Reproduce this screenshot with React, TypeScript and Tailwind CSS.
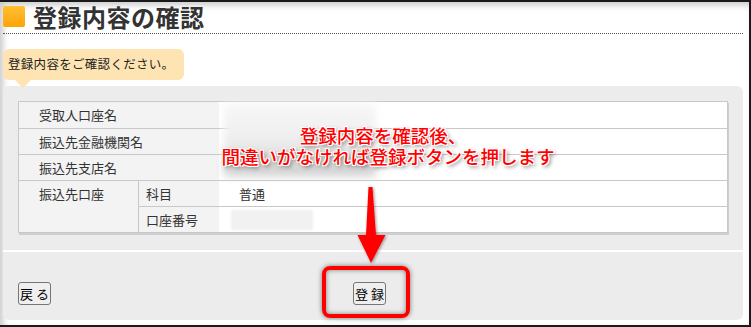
const labelCell = "flex items-center bg-[#f3f3f3] pl-[20px]";

const rows = ["受取人口座名", "振込先金融機関名", "振込先支店名"];

function Btn({ children, className = "" }: { children: React.ReactNode; className?: string }) {
  return (
    <button
      className={`flex h-[23px] w-[33px] items-center justify-center rounded-[3px] border border-[#767676] bg-[#efefef] text-[13px] leading-none text-black ${className}`}
    >
      {children}
    </button>
  );
}

export default function App() {
  return (
    <div className="relative h-[327px] w-[751px] overflow-hidden border-y-2 border-r-2 border-[#1a1a1a] bg-white font-['Noto_Sans_CJK_JP',sans-serif] text-[#333] shadow-[inset_3px_3px_6px_rgba(0,0,0,0.22)]">
      {/* title */}
      <div className="ml-[3px] mr-[6px] flex h-[32px] items-start gap-[8px] border-b border-dotted border-[#555] pt-[4px]">
        <span className="h-[21px] w-[22px] rounded-[2px] bg-gradient-to-b from-[#ffbf2e] to-[#ffa400]" />
        <h1 className="text-[24px] font-bold leading-[22px] tracking-[0.5px] text-[#333]">登録内容の確認</h1>
      </div>

      {/* bubble */}
      <div className="relative ml-[3px] mt-[15px] flex h-[31px] w-[181px] items-center rounded-[6px] bg-[#ffe4b3] pl-[5px] text-[12.5px] tracking-[0.3px] text-[#222]">
        登録内容をご確認ください。
        <span className="absolute left-[12px] top-[31px] z-10 h-0 w-0 border-x-[8px] border-t-[8px] border-x-transparent border-t-[#ffe4b3]" />
      </div>

      {/* panel */}
      <div className="ml-[3px] mr-[6px] mt-[6px] h-[234px] rounded-[6px] bg-[#ececec] px-[15px] pt-[15px]">
        <div className="border border-[#c8c8c8] bg-white text-[13px] text-[#333] shadow-[1px_2px_0_#cfcfcf]">
          {rows.map((r, i) => (
            <div key={r} className={`grid h-[26px] grid-cols-[200px_1fr] ${i === 0 ? "h-[25px]" : "border-t border-[#c8c8c8]"}`}>
              <div className={labelCell}>{r}</div>
              <div />
            </div>
          ))}
          <div className="flex border-t border-[#c8c8c8]">
            <div className="w-[120px] border-r border-[#c8c8c8] bg-[#f3f3f3]">
              <div className="flex h-[25px] items-center pl-[20px]">振込先口座</div>
            </div>
            <div className="flex-1">
              <div className="grid h-[25px] grid-cols-[80px_1fr]">
                <div className="flex items-center bg-[#f3f3f3] pl-[7px]">科目</div>
                <div className="flex items-center pl-[20px]">普通</div>
              </div>
              <div className="grid h-[26px] grid-cols-[80px_1fr] border-t border-[#c8c8c8]">
                <div className="flex items-center bg-[#f3f3f3] pl-[7px]">口座番号</div>
                <div className="flex items-center pl-[12px]">
                  <span className="h-[20px] w-[82px] bg-[#f1f1f1] blur-[1px]" />
                </div>
              </div>
            </div>
          </div>
        </div>

        <div className="-mx-[15px] mt-[17px] h-[2px] bg-white" />

        <div className="mt-[30px] flex">
          <Btn>戻 る</Btn>
          <Btn className="ml-[302px]">登 録</Btn>
        </div>
      </div>

      {/* redacted values */}
      <div className="absolute left-[224px] top-[102px] h-[72px] w-[152px] bg-gradient-to-b from-[#f7f7f7] via-[#eeeeee] to-[#cdcdcd] blur-[4px]" />

      {/* annotation */}
      <div className="absolute left-[220px] top-[123px] w-[336px] text-center text-[18.5px] font-medium leading-[21px] text-[#ff0000] [text-shadow:-1px_-1px_0_#fff,1px_-1px_0_#fff,-1px_1px_0_#fff,1px_1px_0_#fff,0_0_2px_#fff,2px_2px_4px_rgba(0,0,0,0.6)]">
        <p className="pr-[10px]">登録内容を確認後、</p>
        <p>間違いがなければ登録ボタンを押します</p>
      </div>

      <svg className="pointer-events-none absolute left-0 top-0 h-[323px] w-[749px]" viewBox="0 0 749 323">
        <defs>
          <filter id="sh" x="-50%" y="-50%" width="200%" height="200%">
            <feDropShadow dx="1" dy="1" stdDeviation="1.5" floodColor="#000" floodOpacity="0.4" />
          </filter>
        </defs>
        <polygon
          points="368.5,185 372.5,185 376,233 385.5,233 371,261 357.5,233 366,233"
          fill="#ff0000"
          filter="url(#sh)"
        />
      </svg>

      <div className="pointer-events-none absolute left-[322px] top-[264px] h-[52px] w-[88px] rounded-[8px] border-4 border-[#ff0000] shadow-[0_0_5px_rgba(0,0,0,0.5),inset_0_0_5px_rgba(0,0,0,0.45)]" />
    </div>
  );
}
